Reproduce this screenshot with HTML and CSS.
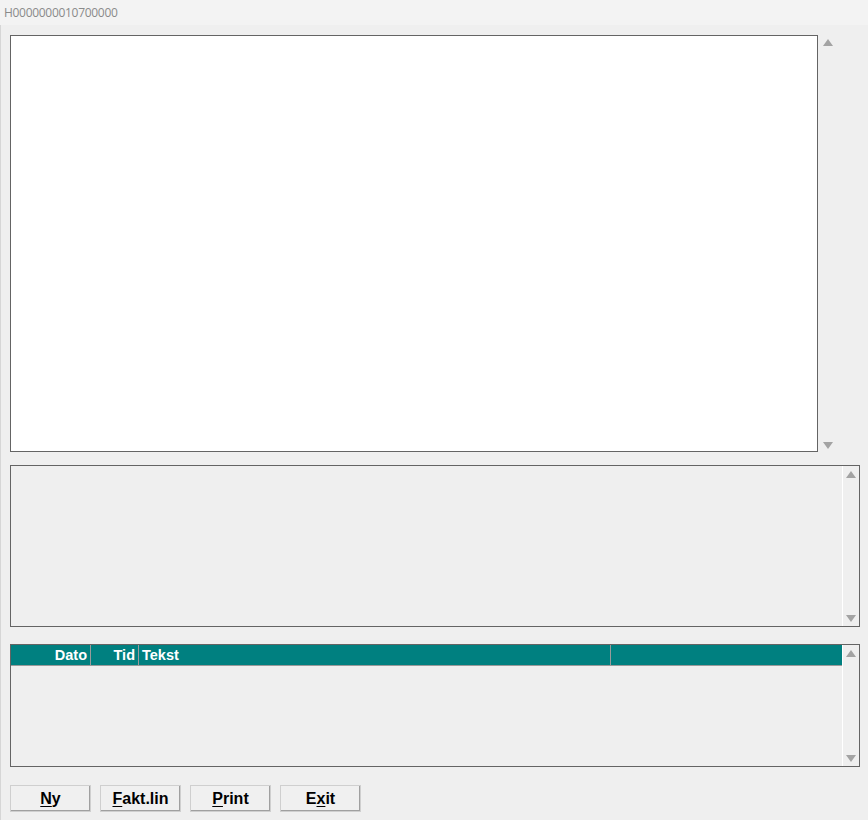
FILE: index.html
```html
<!DOCTYPE html>
<html lang="en">
<head>
    <meta charset="UTF-8">
    <title>H0000000010700000</title>
    <link rel="stylesheet" href="styles.css">
</head>
<body>
    <div class="window">
        <div class="titlebar">H0000000010700000</div>
        <div class="client">
            <div class="row">
                <div class="memo"></div>
                <div class="vscroll outer">
                    <span class="arrow up"></span>
                    <span class="arrow down"></span>
                </div>
            </div>

            <div class="box notes">
                <div class="box-body"></div>
                <div class="vscroll inner">
                    <span class="arrow up"></span>
                    <span class="arrow down"></span>
                </div>
            </div>

            <div class="box log">
                <div class="box-body">
                    <div class="grid-head">
                        <div class="col col-date">Dato</div>
                        <div class="col col-time">Tid</div>
                        <div class="col col-text">Tekst</div>
                        <div class="col col-rest"></div>
                    </div>
                </div>
                <div class="vscroll inner">
                    <span class="arrow up"></span>
                    <span class="arrow down"></span>
                </div>
            </div>

            <div class="buttons">
                <button type="button"><u>N</u>y</button>
                <button type="button"><u>F</u>akt.lin</button>
                <button type="button"><u>P</u>rint</button>
                <button type="button">E<u>x</u>it</button>
            </div>
        </div>
    </div>
</body>
</html>
```

FILE: styles.css
```css
body {
    margin: 0;
    background: #efefef;
    font-family: 'Liberation Sans', Arial, sans-serif;
}

.window {
    width: 868px;
    height: 820px;
    overflow: hidden;
}

.titlebar {
    height: 25px;
    line-height: 26px;
    padding-left: 4px;
    background: #f3f3f3;
    color: #8a8a8a;
    font-family: 'Open Sans', 'Liberation Sans', sans-serif;
    font-size: 12px;
    letter-spacing: -0.3px;
}

.client {
    height: 795px;
    padding: 10px 8px 0 9px;
    box-sizing: border-box;
    border-left: 1px solid #d6d6d6;
}

.row {
    display: flex;
    height: 417px;
}

.memo {
    width: 806px;
    height: 415px;
    background: #ffffff;
    border: 1px solid #646464;
}

.vscroll {
    display: flex;
    flex-direction: column;
    justify-content: space-between;
    align-items: center;
}

.vscroll.outer {
    width: 18px;
    margin-left: 1px;
    padding: 4px 0 3px;
}

.vscroll.inner {
    width: 16px;
    border-left: 1px solid #ffffff;
    padding: 5px 0 4px;
}

.arrow {
    width: 0;
    height: 0;
    border-left: 5px solid transparent;
    border-right: 5px solid transparent;
}

.arrow.up {
    border-bottom: 7px solid #a3a3a3;
}

.arrow.down {
    border-top: 7px solid #a3a3a3;
}

.box {
    display: flex;
    width: 850px;
    border: 1px solid #646464;
    box-sizing: border-box;
}

.box-body {
    flex: 1;
}

.notes {
    height: 162px;
    margin-top: 13px;
}

.log {
    height: 123px;
    margin-top: 17px;
}

.grid-head {
    display: flex;
    height: 20px;
    background: #008080;
    border-bottom: 1px solid #9a9a9a;
    color: #ffffff;
    font-weight: bold;
    font-size: 14.5px;
    line-height: 20px;
}

.col {
    border-right: 1px solid #9a9a9a;
    box-sizing: border-box;
}

.col-date {
    width: 80px;
    text-align: right;
    padding-right: 3px;
}

.col-time {
    width: 48px;
    text-align: right;
    padding-right: 3px;
}

.col-text {
    width: 472px;
    padding-left: 3px;
}

.col-rest {
    flex: 1;
    border-right: none;
}

.buttons {
    display: flex;
    gap: 9px;
    margin-top: 18px;
}

button {
    width: 81px;
    height: 27px;
    padding: 0;
    background: #f0f0f0;
    border: 1px solid;
    border-color: #ffffff #6e6e6e #6e6e6e #ffffff;
    box-shadow: inset -1px -1px 0 #a0a0a0;
    outline: 1px solid #cfcfcf;
    outline-offset: -1px;
    font-family: 'Liberation Sans', Arial, sans-serif;
    font-weight: bold;
    font-size: 16px;
    color: #000000;
}

button u {
    text-underline-offset: 2px;
}
```
